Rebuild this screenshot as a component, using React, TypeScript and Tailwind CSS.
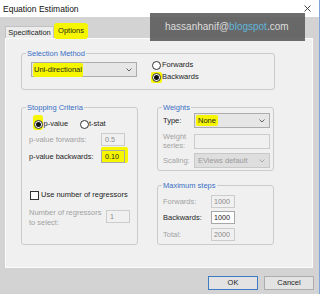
import React from "react";

function Radio({ checked }: { checked?: boolean }) {
  return (
    <span className="w-[9px] h-[9px] rounded-full border border-[#333333] bg-white flex items-center justify-center shrink-0">
      {checked ? <span className="w-[5px] h-[5px] rounded-full bg-[#111111]" /> : null}
    </span>
  );
}

function Chevron({ color }: { color: string }) {
  return (
    <svg width="6" height="4" viewBox="0 0 6 4" className="shrink-0">
      <polyline points="0.5,0.5 3,3 5.5,0.5" fill="none" stroke={color} strokeWidth="0.9" />
    </svg>
  );
}

export default function App() {
  return (
    <div className="w-[320px] h-[294px] bg-[#d3d3d3] border-r border-[#7ea6dc] relative overflow-hidden font-['Liberation_Sans',sans-serif] text-[7.5px] leading-[10px] text-[#1e1e1e]">
      {/* title bar */}
      <div className="h-[17px] bg-white flex items-center justify-between pl-[3px] pr-[8px]">
        <span className="text-[8.5px] leading-[12px] text-[#111111]">Equation Estimation</span>
        <svg width="7" height="7" viewBox="0 0 7 7">
          <line x1="0.5" y1="0.5" x2="6.5" y2="6.5" stroke="#333333" strokeWidth="0.9" />
          <line x1="6.5" y1="0.5" x2="0.5" y2="6.5" stroke="#333333" strokeWidth="0.9" />
        </svg>
      </div>

      {/* tabs */}
      <div className="h-[21px] flex items-end pl-[5px]">
        <div className="w-[49px] h-[12px] border border-b-0 border-[#c2c2c2] bg-[#ececec] flex items-center justify-center">
          Specification
        </div>
        <div className="relative z-10 -mb-[1px] w-[34px] h-[16px] bg-[#f6f600] rounded-[3px] flex items-center justify-center pb-[1px]">
          Options
        </div>
      </div>

      {/* panel */}
      <div className="ml-[5px] w-[308px] h-[230px] bg-[#f0f0f0] border border-[#fbfbfb] pl-[15px] pt-[10px]">
        {/* Selection Method */}
        <fieldset className="w-[254px] border border-[#cbcbcb] rounded-[3px]">
          <legend className="ml-[4px] px-[1px] leading-[9px] text-[#3a6fc4]">Selection Method</legend>
          <div className="flex items-start pl-[9px] pt-[1px] pb-[6px]">
            <div className="mt-[3px] w-[106px] h-[15px] border border-[#acacac] bg-[#e6e6e6] flex items-center justify-between pl-[1px] pr-[4px]">
              <span className="h-[14px] bg-[#f6f600] px-[1px] rounded-[2px] flex items-center">Uni-directional</span>
              <Chevron color="#555555" />
            </div>
            <div className="ml-[15px] flex flex-col">
              <div className="h-[12px] flex items-center gap-[1px]">
                <Radio />
                <span>Forwards</span>
              </div>
              <div className="h-[12px] flex items-center gap-[1px]">
                <span className="bg-[#f6f600] rounded-[2px] p-[1px] -m-[1px]">
                  <Radio checked />
                </span>
                <span>Backwards</span>
              </div>
            </div>
          </div>
        </fieldset>

        <div className="mt-[13px] flex items-start gap-[19px]">
          {/* Stopping Criteria */}
          <fieldset className="w-[117px] border border-[#cbcbcb] rounded-[3px]">
            <legend className="ml-[4px] px-[1px] leading-[9px] text-[#3a6fc4]">Stopping Criteria</legend>
            <div className="pl-[7px] pt-[7px] pb-[16px] flex flex-col">
              <div className="ml-[4px] h-[10px] flex items-center">
                <div className="w-[47px] flex items-center">
                  <span className="bg-[#f6f600] rounded-[3px] pt-[5px] pb-[1px] px-[0.5px] -mt-[5px] -mb-[1px]">
                    <Radio checked />
                  </span>
                  <span className="ml-[0.5px]">p-value</span>
                </div>
                <Radio />
                <span>t-stat</span>
              </div>
              <div className="mt-[4px] h-[13px] flex items-center">
                <span className="w-[72px] text-[#a2a2a2]">p-value forwards:</span>
                <div className="w-[24px] h-[13px] border border-[#cccccc] bg-[#f0f0f0] flex items-center pl-[3px] text-[7.2px] text-[#8a8a8a]">0.5</div>
              </div>
              <div className="mt-[4px] h-[13px] flex items-center">
                <span className="w-[72px]">p-value backwards:</span>
                <div className="bg-[#f6f600] rounded-[2px] pt-[3px] pr-[3px] -mt-[3px] -mr-[3px]">
                  <div className="w-[24px] h-[13px] border border-[#a8a8a8] flex items-center pl-[3px] text-[7.2px]">0.10</div>
                </div>
              </div>
              <div className="mt-[27px] ml-[1px] h-[10px] flex items-center gap-[2px]">
                <span className="w-[9px] h-[9px] border border-[#333333] bg-white shrink-0" />
                <span>Use number of regressors</span>
              </div>
              <div className="mt-[8px] flex items-start">
                <span className="w-[77px] text-[#a2a2a2]">
                  Number of regressors
                  <br />
                  to select:
                </span>
                <div className="mt-[2px] w-[24px] h-[13px] border border-[#cccccc] bg-[#f0f0f0] flex items-center pl-[3px] text-[7.2px] text-[#8a8a8a]">1</div>
              </div>
            </div>
          </fieldset>

          <div className="w-[117px] flex flex-col">
            {/* Weights */}
            <fieldset className="w-[117px] border border-[#cbcbcb] rounded-[3px]">
              <legend className="ml-[4px] px-[1px] leading-[9px] text-[#3a6fc4]">Weights</legend>
              <div className="pl-[5px] pt-[1px] pb-[2px] flex flex-col">
                <div className="h-[15px] flex items-center">
                  <span className="w-[31px]">Type:</span>
                  <div className="w-[76px] h-[15px] border border-[#acacac] bg-[#e6e6e6] flex items-center justify-between pl-[1px] pr-[4px]">
                    <span className="bg-[#f6f600] rounded-[2px] px-[2px] h-[11px] flex items-center">None</span>
                    <Chevron color="#555555" />
                  </div>
                </div>
                <div className="mt-[4px] flex items-center">
                  <span className="w-[31px] leading-[9px] text-[#a2a2a2]">
                    Weight
                    <br />
                    series:
                  </span>
                  <div className="w-[76px] h-[15px] border border-[#cccccc] bg-[#f0f0f0]" />
                </div>
                <div className="mt-[3px] h-[15px] flex items-center">
                  <span className="w-[31px] text-[#a2a2a2]">Scaling:</span>
                  <div className="w-[76px] h-[15px] border border-[#c8c8c8] bg-[#dedede] flex items-center justify-between pl-[3px] pr-[4px] text-[#9a9a9a]">
                    <span>EViews default</span>
                    <Chevron color="#a0a0a0" />
                  </div>
                </div>
              </div>
            </fieldset>

            {/* Maximum steps */}
            <fieldset className="mt-[10px] w-[117px] border border-[#cbcbcb] rounded-[3px]">
              <legend className="ml-[4px] px-[1px] leading-[9px] text-[#3a6fc4]">Maximum steps</legend>
              <div className="pl-[5px] pt-[5px] pb-[3px] flex flex-col">
                <div className="h-[13px] flex items-center">
                  <span className="w-[48px] text-[#a2a2a2]">Forwards:</span>
                  <div className="w-[24px] h-[13px] border border-[#cccccc] bg-[#f0f0f0] flex items-center pl-[2px] text-[7.2px] text-[#8a8a8a]">1000</div>
                </div>
                <div className="mt-[3px] h-[13px] flex items-center">
                  <span className="w-[48px]">Backwards:</span>
                  <div className="w-[24px] h-[13px] border border-[#a8a8a8] bg-white flex items-center pl-[2px] text-[7.2px]">1000</div>
                </div>
                <div className="mt-[4px] h-[13px] flex items-center">
                  <span className="w-[48px] text-[#a2a2a2]">Total:</span>
                  <div className="w-[24px] h-[13px] border border-[#cccccc] bg-[#f0f0f0] flex items-center pl-[2px] text-[7.2px] text-[#8a8a8a]">2000</div>
                </div>
              </div>
            </fieldset>
          </div>
        </div>
      </div>

      {/* buttons */}
      <div className="mt-[8px] flex justify-end gap-[6px] pr-[5px]">
        <div className="w-[50px] h-[14px] border border-[#3d7bc4] bg-[#e3e3e3] flex items-center justify-center">OK</div>
        <div className="w-[50px] h-[14px] border border-[#adadad] bg-[#e3e3e3] flex items-center justify-center">Cancel</div>
      </div>

      {/* watermark overlay */}
      <div className="absolute left-[150px] top-[13px] w-[155px] h-[28px] bg-[rgba(92,92,92,0.9)] flex items-center pl-[15px] font-['Liberation_Sans',sans-serif] text-[10px] text-[#dedede]">
        hassanhanif@<span className="text-[#5fb6dc]">blogspot</span>.com
      </div>
    </div>
  );
}
